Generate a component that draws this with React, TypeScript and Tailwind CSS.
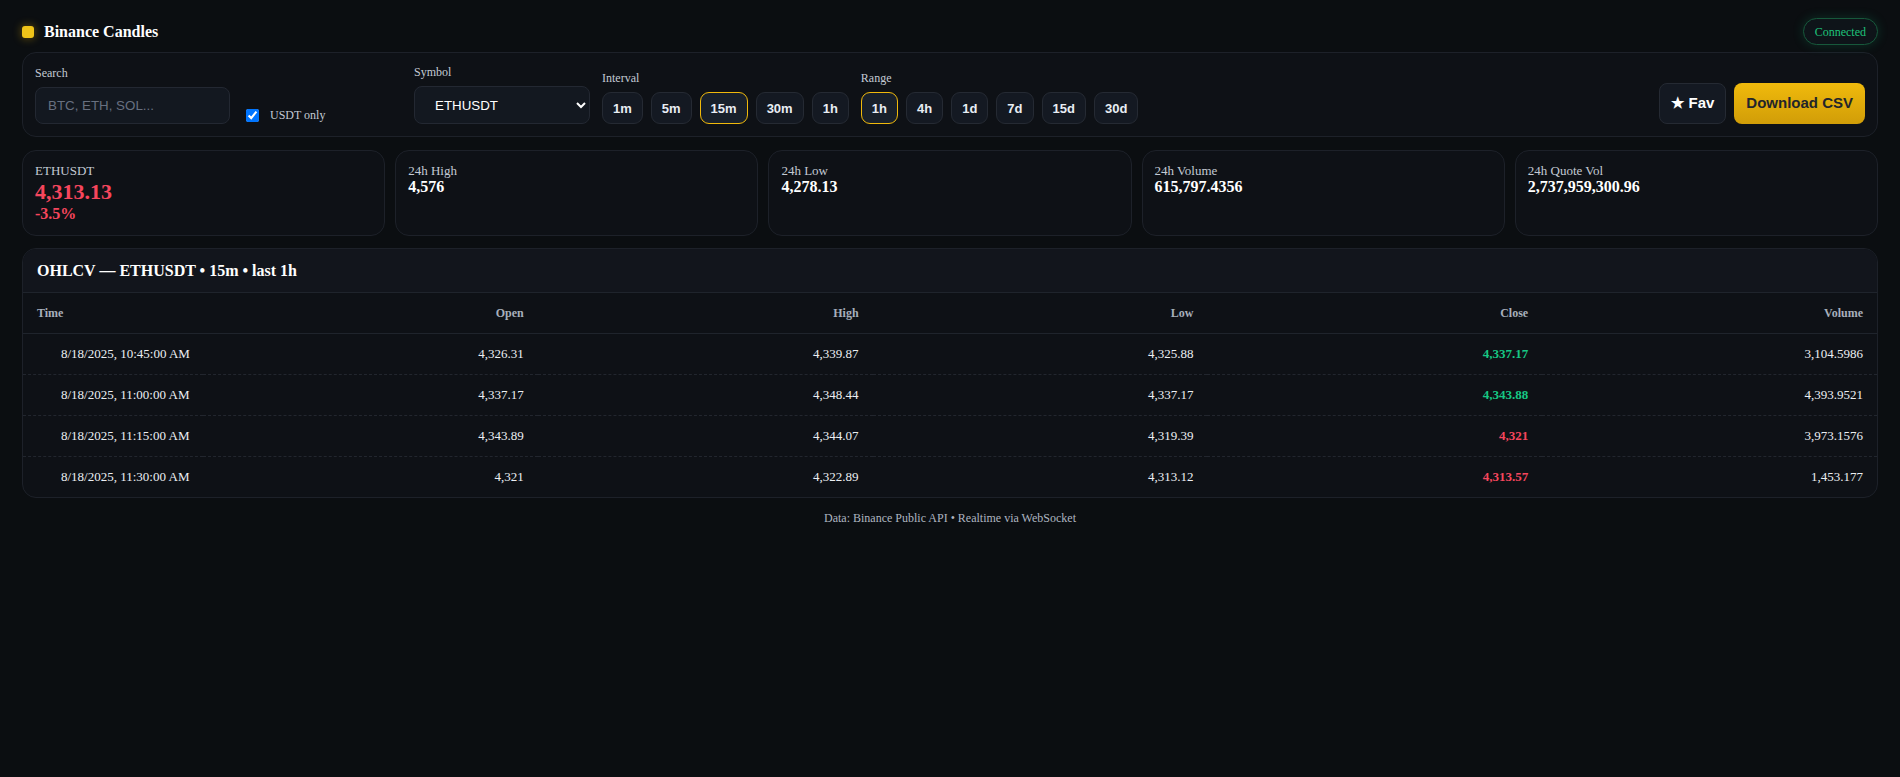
import { useState } from "react";

const serif = "font-['Liberation_Serif','Times_New_Roman',serif]";
const sans = "font-['Liberation_Sans',Arial,sans-serif]";

const intervals = ["1m", "5m", "15m", "30m", "1h"];
const ranges = ["1h", "4h", "1d", "7d", "15d", "30d"];

const stats = [
  { label: "24h High", value: "4,576" },
  { label: "24h Low", value: "4,278.13" },
  { label: "24h Volume", value: "615,797.4356" },
  { label: "24h Quote Vol", value: "2,737,959,300.96" },
];

const rows = [
  { t: "8/18/2025, 10:45:00 AM", o: "4,326.31", h: "4,339.87", l: "4,325.88", c: "4,337.17", v: "3,104.5986", up: true },
  { t: "8/18/2025, 11:00:00 AM", o: "4,337.17", h: "4,348.44", l: "4,337.17", c: "4,343.88", v: "4,393.9521", up: true },
  { t: "8/18/2025, 11:15:00 AM", o: "4,343.89", h: "4,344.07", l: "4,319.39", c: "4,321", v: "3,973.1576", up: false },
  { t: "8/18/2025, 11:30:00 AM", o: "4,321", h: "4,322.89", l: "4,313.12", c: "4,313.57", v: "1,453.177", up: false },
];

function Pill({ label, active, onClick }: { label: string; active: boolean; onClick: () => void }) {
  return (
    <button
      onClick={onClick}
      className={`${sans} h-[32px] px-[10px] rounded-[9px] border text-[13px] font-bold text-[#e8edf3] leading-none ${
        active ? "border-[#f0b90b] bg-[#18202b]" : "border-[#252a33] bg-[#141922]"
      }`}
    >
      {label}
    </button>
  );
}

export default function App() {
  const [interval, setInterval] = useState("15m");
  const [range, setRange] = useState("1h");

  return (
    <div className={`min-h-screen bg-[#0b0e11] text-[#e6e9ee] px-[22px] pt-[18px] ${serif}`}>
      {/* header */}
      <div className="flex items-center justify-between h-[27px]">
        <div className="flex items-center gap-[10px]">
          <span className="w-[12px] h-[12px] rounded-[3px] bg-[#f0c419] shadow-[0_0_10px_rgba(240,185,11,0.45)]" />
          <h1 className="text-[16px] font-bold text-white">Binance Candles</h1>
        </div>
        <span className="h-[27px] px-[11px] flex items-center rounded-full border border-[#17583b] bg-[#0e1419] text-[12px] text-[#1ec27a] shadow-[0_0_12px_rgba(22,199,132,0.18)]">
          Connected
        </span>
      </div>

      {/* controls */}
      <div className="mt-[7px] flex items-end gap-3 p-3 rounded-[14px] border border-[#1d2129] bg-[#0e1116]">
        <div className="flex items-end gap-4 w-[367px] shrink-0">
          <div className="flex flex-col gap-[7px]">
            <span className="text-[12px] leading-[14px] text-[#c3cad4]">Search</span>
            <input
              placeholder="BTC, ETH, SOL..."
              className={`${sans} w-[195px] h-[37px] px-[12px] rounded-[8px] border border-[#232832] bg-[#131820] text-[13.333px] text-white placeholder:text-[#687080] outline-none`}
            />
          </div>
          <label className="flex items-center gap-[11px] pb-[2px] text-[12px] leading-[14px] text-[#c3cad4]">
            <input type="checkbox" defaultChecked className="w-[13px] h-[13px]" />
            USDT only
          </label>
        </div>

        <div className="flex flex-col gap-[7px]">
          <span className="text-[12px] leading-[14px] text-[#c3cad4]">Symbol</span>
          <select
            defaultValue="ETHUSDT"
            className={`${sans} w-[176px] h-[38px] pl-[16px] pr-[8px] rounded-[8px] border border-[#232832] bg-[#131820] text-[13.333px] text-white`}
          >
            <option>ETHUSDT</option>
            <option>BTCUSDT</option>
            <option>SOLUSDT</option>
          </select>
        </div>

        <div className="flex flex-col gap-[7px]">
          <span className="text-[12px] leading-[14px] text-[#c3cad4]">Interval</span>
          <div className="flex gap-2">
            {intervals.map((i) => (
              <Pill key={i} label={i} active={i === interval} onClick={() => setInterval(i)} />
            ))}
          </div>
        </div>

        <div className="flex flex-col gap-[7px]">
          <span className="text-[12px] leading-[14px] text-[#c3cad4]">Range</span>
          <div className="flex gap-2">
            {ranges.map((r) => (
              <Pill key={r} label={r} active={r === range} onClick={() => setRange(r)} />
            ))}
          </div>
        </div>

        <div className="ml-auto flex gap-2">
          <button className={`${sans} h-[41px] px-[11px] rounded-[8px] border border-[#252a33] bg-[#141922] text-[15px] font-bold text-white`}>
            ★ Fav
          </button>
          <button className={`${sans} h-[41px] px-3 rounded-[8px] bg-gradient-to-b from-[#f0ba0c] to-[#d19d08] text-[15px] font-bold text-[#22252b]`}>
            Download CSV
          </button>
        </div>
      </div>

      {/* stats */}
      <div className="mt-[13px] grid grid-cols-5 gap-[10px]">
        <div className="h-[86px] px-3 pt-3 rounded-[14px] border border-[#1d2129] bg-[#0e1116]">
          <div className="text-[13px] leading-[15px] text-[#c3cad4]">ETHUSDT</div>
          <div className="mt-[1px] text-[22px] leading-[26px] font-bold text-[#f6465d]">4,313.13</div>
          <div className="text-[16px] leading-[18px] font-bold text-[#f6465d]">-3.5%</div>
        </div>
        {stats.map((s) => (
          <div key={s.label} className="h-[86px] px-3 pt-3 rounded-[14px] border border-[#1d2129] bg-[#0e1116]">
            <div className="text-[13px] leading-[15px] text-[#c3cad4]">{s.label}</div>
            <div className="text-[16px] leading-[18px] font-bold text-white">{s.value}</div>
          </div>
        ))}
      </div>

      {/* table */}
      <div className="mt-[12px] rounded-[14px] border border-[#1d2129] bg-[#0e1116] overflow-hidden">
        <div className="h-[44px] px-[14px] flex items-center bg-[#12151c] border-b border-[#1f242c]">
          <h2 className="text-[16px] font-bold text-white">OHLCV — ETHUSDT • {interval} • last {range}</h2>
        </div>
        <table className="w-full table-fixed border-collapse">
          <colgroup>
            <col className="w-[180px]" />
            <col />
            <col />
            <col />
            <col />
            <col />
          </colgroup>
          <thead>
            <tr className="h-[40px] border-b border-[#1f242c] text-[12px] font-bold text-[#a7afbb]">
              <th className="px-[14px] text-left">Time</th>
              <th className="px-[14px] text-right">Open</th>
              <th className="px-[14px] text-right">High</th>
              <th className="px-[14px] text-right">Low</th>
              <th className="px-[14px] text-right">Close</th>
              <th className="px-[14px] text-right">Volume</th>
            </tr>
          </thead>
          <tbody className="text-[13px] text-[#eceff3]">
            {rows.map((r, i) => (
              <tr key={r.t} className={`h-[41px] ${i < rows.length - 1 ? "border-b border-dashed border-[#22262e]" : ""}`}>
                <td className="pl-[38px] pr-[14px] whitespace-nowrap">{r.t}</td>
                <td className="px-[14px] text-right">{r.o}</td>
                <td className="px-[14px] text-right">{r.h}</td>
                <td className="px-[14px] text-right">{r.l}</td>
                <td className={`px-[14px] text-right font-bold ${r.up ? "text-[#16c784]" : "text-[#f6465d]"}`}>{r.c}</td>
                <td className="px-[14px] text-right">{r.v}</td>
              </tr>
            ))}
          </tbody>
        </table>
      </div>

      <p className="mt-[13px] text-center text-[12px] leading-[14px] text-[#aeb5c0]">
        Data: Binance Public API • Realtime via WebSocket
      </p>
    </div>
  );
}
